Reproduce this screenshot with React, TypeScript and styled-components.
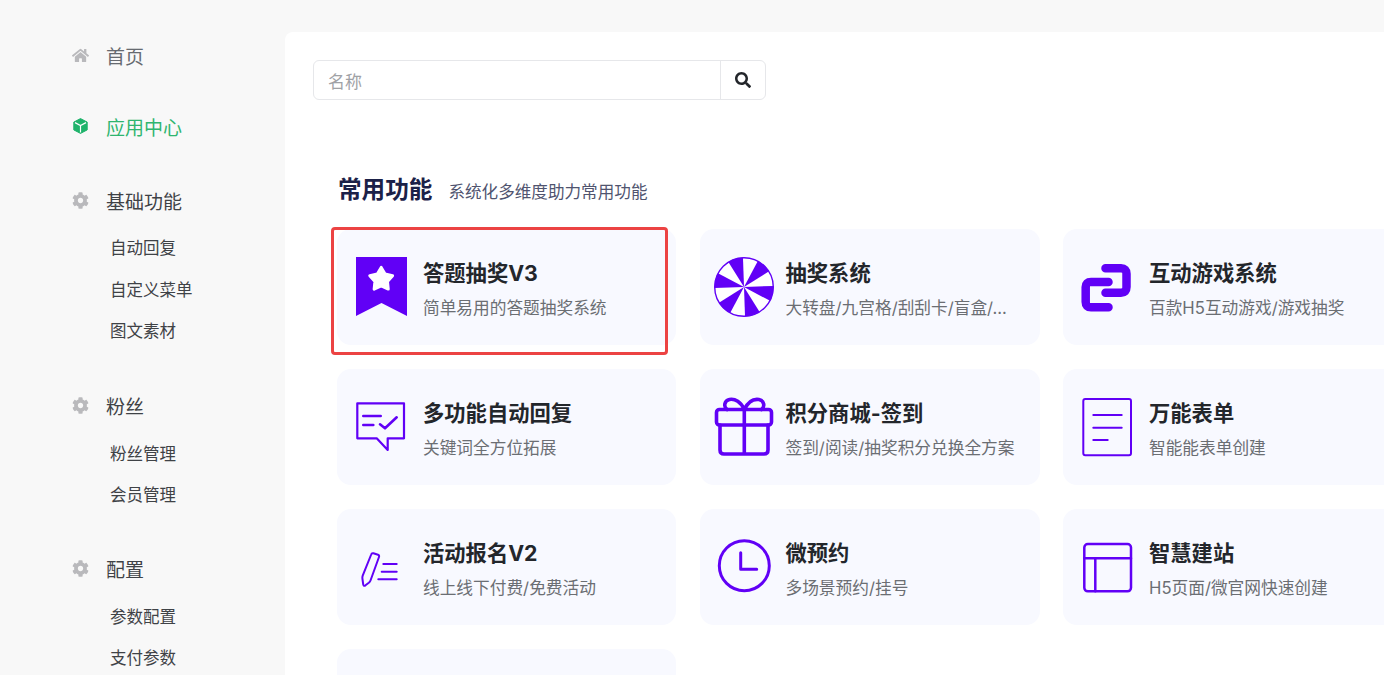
import React from "react";
import styled, { createGlobalStyle } from "styled-components";
import { FaHome, FaCog, FaSearch } from "react-icons/fa";

const PURPLE = "#6100f6";

const Global = createGlobalStyle`
  html, body { margin: 0; padding: 0; height: 100%; overflow: hidden; background: #f8f8f8; }
  * { box-sizing: border-box; }
  body { font-family: Inter, "Noto Sans CJK SC", sans-serif; }
`;

const Page = styled.div`
  display: flex;
  width: 1384px;
  height: 675px;
  overflow: hidden;
  background: #f8f8f8;
`;

const Sidebar = styled.nav`
  flex: 0 0 285px;
  padding: 36px 0 0 71px;
`;

const Group = styled.div<{ $gap: number }>`
  margin-bottom: ${(p) => p.$gap}px;
`;

const GroupTitle = styled.div<{ $active?: boolean; $muted?: boolean }>`
  display: flex;
  align-items: center;
  height: 40px;
  padding-bottom: 2px;
  font-size: 19px;
  color: ${(p) => (p.$active ? "#2fb56f" : p.$muted ? "#666a70" : "#3f4246")};
`;

const NavIcon = styled.span<{ $active?: boolean }>`
  display: flex;
  justify-content: center;
  width: 18px;
  margin-right: 17px;
  font-size: 17px;
  color: ${(p) => (p.$active ? "#1fb36b" : "#b9b9bc")};
`;

const SubList = styled.div`
  margin-top: 7px;
  padding-left: 39px;
`;

const SubItem = styled.div`
  height: 41.5px;
  line-height: 41.5px;
  font-size: 16.5px;
  color: #3f4246;
`;

const Main = styled.main`
  flex: 1;
  margin-top: 32px;
  padding: 28px 0 0 28px;
  background: #fff;
  border-top-left-radius: 8px;
  min-width: 0;
`;

const Search = styled.div`
  display: flex;
  width: 453px;
  height: 40px;
  border: 1px solid #e6e7ea;
  border-radius: 6px;
  background: #fff;
`;

const SearchField = styled.div`
  flex: 1;
  padding: 2px 0 0 14px;
  line-height: 38px;
  font-size: 17px;
  color: #a0a2a6;
`;

const SearchButton = styled.div`
  display: flex;
  align-items: center;
  justify-content: center;
  width: 45px;
  border-left: 1px solid #e6e7ea;
  font-size: 16px;
  color: #23262b;
`;

const Section = styled.section`
  padding: 72px 0 0 24px;
`;

const Heading = styled.div`
  display: flex;
  align-items: baseline;
  height: 39px;
  margin-bottom: 18px;
  padding-left: 1px;
`;

const HeadingTitle = styled.h2`
  margin: 0 16px 0 0;
  font-size: 23.6px;
  line-height: 36px;
  font-weight: 700;
  color: #1b2148;
`;

const HeadingSub = styled.span`
  font-size: 16.6px;
  color: #50546f;
`;

const Grid = styled.div`
  position: relative;
  display: grid;
  grid-template-columns: 339px 340px 340px;
  grid-auto-rows: 116px;
  gap: 24px 23.5px;
`;

const Card = styled.article`
  display: flex;
  align-items: center;
  gap: 12px;
  padding: 0 20px 0 14px;
  background: #f8f9ff;
  border-radius: 14px;
`;

const IconBox = styled.svg`
  flex: 0 0 60px;
  width: 60px;
  height: 60px;
  overflow: visible;
`;

const CardText = styled.div`
  min-width: 0;
  flex: 1;
  padding-top: 5px;
`;

const CardTitle = styled.div`
  font-size: 21.3px;
  line-height: 30px;
  font-weight: 700;
  color: #23262b;
  white-space: nowrap;
`;

const CardDesc = styled.div`
  margin-top: 7px;
  font-size: 16.7px;
  line-height: 26px;
  color: #6b6e73;
  white-space: nowrap;
`;

const Highlight = styled.div`
  position: absolute;
  left: -6px;
  top: -2px;
  width: 337px;
  height: 128px;
  border: 3px solid #ec4343;
  border-radius: 4px;
  pointer-events: none;
`;

const line = {
  fill: "none",
  stroke: PURPLE,
  strokeLinecap: "round" as const,
  strokeLinejoin: "round" as const,
};

const wedge = (from: number, to: number) => {
  const r = 29.5;
  const p = (a: number) => {
    const t = ((a - 90) * Math.PI) / 180;
    return `${30 + r * Math.cos(t)} ${30 + r * Math.sin(t)}`;
  };
  return `M30 30L${p(from)}A${r} ${r} 0 0 1 ${p(to)}Z`;
};

const starPath = (cx: number, cy: number, outer: number, inner: number) => {
  const pts = Array.from({ length: 10 }, (_, i) => {
    const r = i % 2 === 0 ? outer : inner;
    const t = ((i * 36 - 90) * Math.PI) / 180;
    return `${(cx + r * Math.cos(t)).toFixed(2)} ${(cy + r * Math.sin(t)).toFixed(2)}`;
  });
  return `M${pts.join("L")}Z`;
};

const CubeIcon = () => (
  <svg width="15" height="16" viewBox="0 0 15 16">
    <path
      d="M7.5.6L14.2 4.1V11.9L7.5 15.4.8 11.9V4.1Z"
      fill="#1fb36b"
      stroke="#1fb36b"
      strokeWidth="1"
      strokeLinejoin="round"
    />
    <path d="M2 4.6L7.5 7.5 13 4.6M7.5 7.5V14.6" fill="none" stroke="#fff" strokeWidth="1.2" />
  </svg>
);

const icons: Record<string, React.ReactNode> = {
  bookmark: (
    <>
      <path d="M5 0H56V59L30.5 46 5 59Z" fill={PURPLE} />
      <path
        d={starPath(30.2, 22.4, 12, 6.6)}
        fill="#fff"
        stroke="#fff"
        strokeWidth="3"
        strokeLinejoin="round"
      />
    </>
  ),
  wheel: (
    <>
      <circle cx="30" cy="30" r="29.3" fill="#fff" stroke={PURPLE} strokeWidth="1.4" />
      {[-30, 30, 90, 150, 210, 270].map((a) => (
        <path key={a} d={wedge(a - 2, a + 28)} fill={PURPLE} />
      ))}
    </>
  ),
  link: (
    <g {...line} strokeWidth="8.5">
      <path d="M28.5 11.3H44Q49.5 11.3 49.5 16.8V30Q49.5 35.7 44 35.7H28.5" />
      <path d="M31.5 25H14Q8.7 25 8.7 30V45Q8.7 50.3 14 50.3H31.5" />
    </g>
  ),
  chat: (
    <g {...line}>
      <path
        strokeWidth="2.2"
        d="M6.3 6.3H53V41.3H36.7V53L25.7 41.3H6.3Z"
      />
      <path strokeWidth="2.6" d="M12.3 19H29.7M12.3 28H22.3M29 27.3L34 31.3 45.7 20.3" />
    </g>
  ),
  gift: (
    <g {...line} strokeWidth="3.6">
      <rect x="2.5" y="12.5" width="55" height="15.5" rx="3" />
      <path d="M6 28V53Q6 57 10 57H50Q54 57 54 53V28M30.3 12.5V57" />
      <path d="M30.3 12.5C27 5 21 1.5 15.5 2.5 10 3.5 9.5 10 13 12.5M30.3 12.5C34 5 39 1.5 45 2.5 50.5 3.5 51 10 47.5 12.5" />
    </g>
  ),
  form: (
    <g {...line} strokeWidth="2">
      <rect x="6.3" y="2" width="47.7" height="56.3" rx="2" />
      <path d="M16.3 18H44.7M16.3 30.7H44.7M16.3 43H30.7" />
    </g>
  ),
  pen: (
    <g {...line} strokeWidth="2">
      <path d="M20.2 17.5Q20.7 15.8 22.4 16.3L27 17.8Q28.6 18.4 28 20L19.5 43.5Q19 44.8 17.8 45.8L14.5 48.3Q12.5 49.6 12.2 47.4L11.4 41.5Q11.2 40 11.7 38.6Z" />
      <path d="M32.3 27H45.7M30.7 34.7H45.7M27.3 42.3H45.7" />
    </g>
  ),
  clock: (
    <g {...line} strokeWidth="3">
      <circle cx="30.3" cy="28.7" r="25" />
      <path d="M26.7 15.7V32.3H42.7" />
    </g>
  ),
  layout: (
    <g {...line} strokeWidth="2.5">
      <rect x="7.3" y="7" width="46.7" height="47.3" rx="3.5" />
      <path d="M7.3 21.3H54M18.3 21.3V54.3" />
    </g>
  ),
};

const cards: { icon?: string; title?: string; desc?: string }[] = [
  { icon: "bookmark", title: "答题抽奖V3", desc: "简单易用的答题抽奖系统" },
  { icon: "wheel", title: "抽奖系统", desc: "大转盘/九宫格/刮刮卡/盲盒/..." },
  { icon: "link", title: "互动游戏系统", desc: "百款H5互动游戏/游戏抽奖" },
  { icon: "chat", title: "多功能自动回复", desc: "关键词全方位拓展" },
  { icon: "gift", title: "积分商城-签到", desc: "签到/阅读/抽奖积分兑换全方案" },
  { icon: "form", title: "万能表单", desc: "智能能表单创建" },
  { icon: "pen", title: "活动报名V2", desc: "线上线下付费/免费活动" },
  { icon: "clock", title: "微预约", desc: "多场景预约/挂号" },
  { icon: "layout", title: "智慧建站", desc: "H5页面/微官网快速创建" },
  {},
];

const nav = [
  { title: "首页", icon: <FaHome />, muted: true, gap: 31 },
  { title: "应用中心", icon: <CubeIcon />, active: true, gap: 34 },
  { title: "基础功能", icon: <FaCog />, subs: ["自动回复", "自定义菜单", "图文素材"], gap: 34 },
  { title: "粉丝", icon: <FaCog />, subs: ["粉丝管理", "会员管理"], gap: 33 },
  { title: "配置", icon: <FaCog />, subs: ["参数配置", "支付参数"], gap: 33 },
];

export default function App() {
  return (
    <Page>
      <Global />
      <Sidebar>
        {nav.map((g) => (
          <Group key={g.title} $gap={g.gap}>
            <GroupTitle $active={g.active} $muted={g.muted}>
              <NavIcon $active={g.active}>{g.icon}</NavIcon>
              {g.title}
            </GroupTitle>
            {g.subs && (
              <SubList>
                {g.subs.map((s) => (
                  <SubItem key={s}>{s}</SubItem>
                ))}
              </SubList>
            )}
          </Group>
        ))}
      </Sidebar>
      <Main>
        <Search>
          <SearchField>名称</SearchField>
          <SearchButton>
            <FaSearch />
          </SearchButton>
        </Search>
        <Section>
          <Heading>
            <HeadingTitle>常用功能</HeadingTitle>
            <HeadingSub>系统化多维度助力常用功能</HeadingSub>
          </Heading>
          <Grid>
            {cards.map((c, i) => (
              <Card key={i}>
                {c.icon && (
                  <>
                    <IconBox viewBox="0 0 60 60">{icons[c.icon]}</IconBox>
                    <CardText>
                      <CardTitle>{c.title}</CardTitle>
                      <CardDesc>{c.desc}</CardDesc>
                    </CardText>
                  </>
                )}
              </Card>
            ))}
            <Highlight />
          </Grid>
        </Section>
      </Main>
    </Page>
  );
}
